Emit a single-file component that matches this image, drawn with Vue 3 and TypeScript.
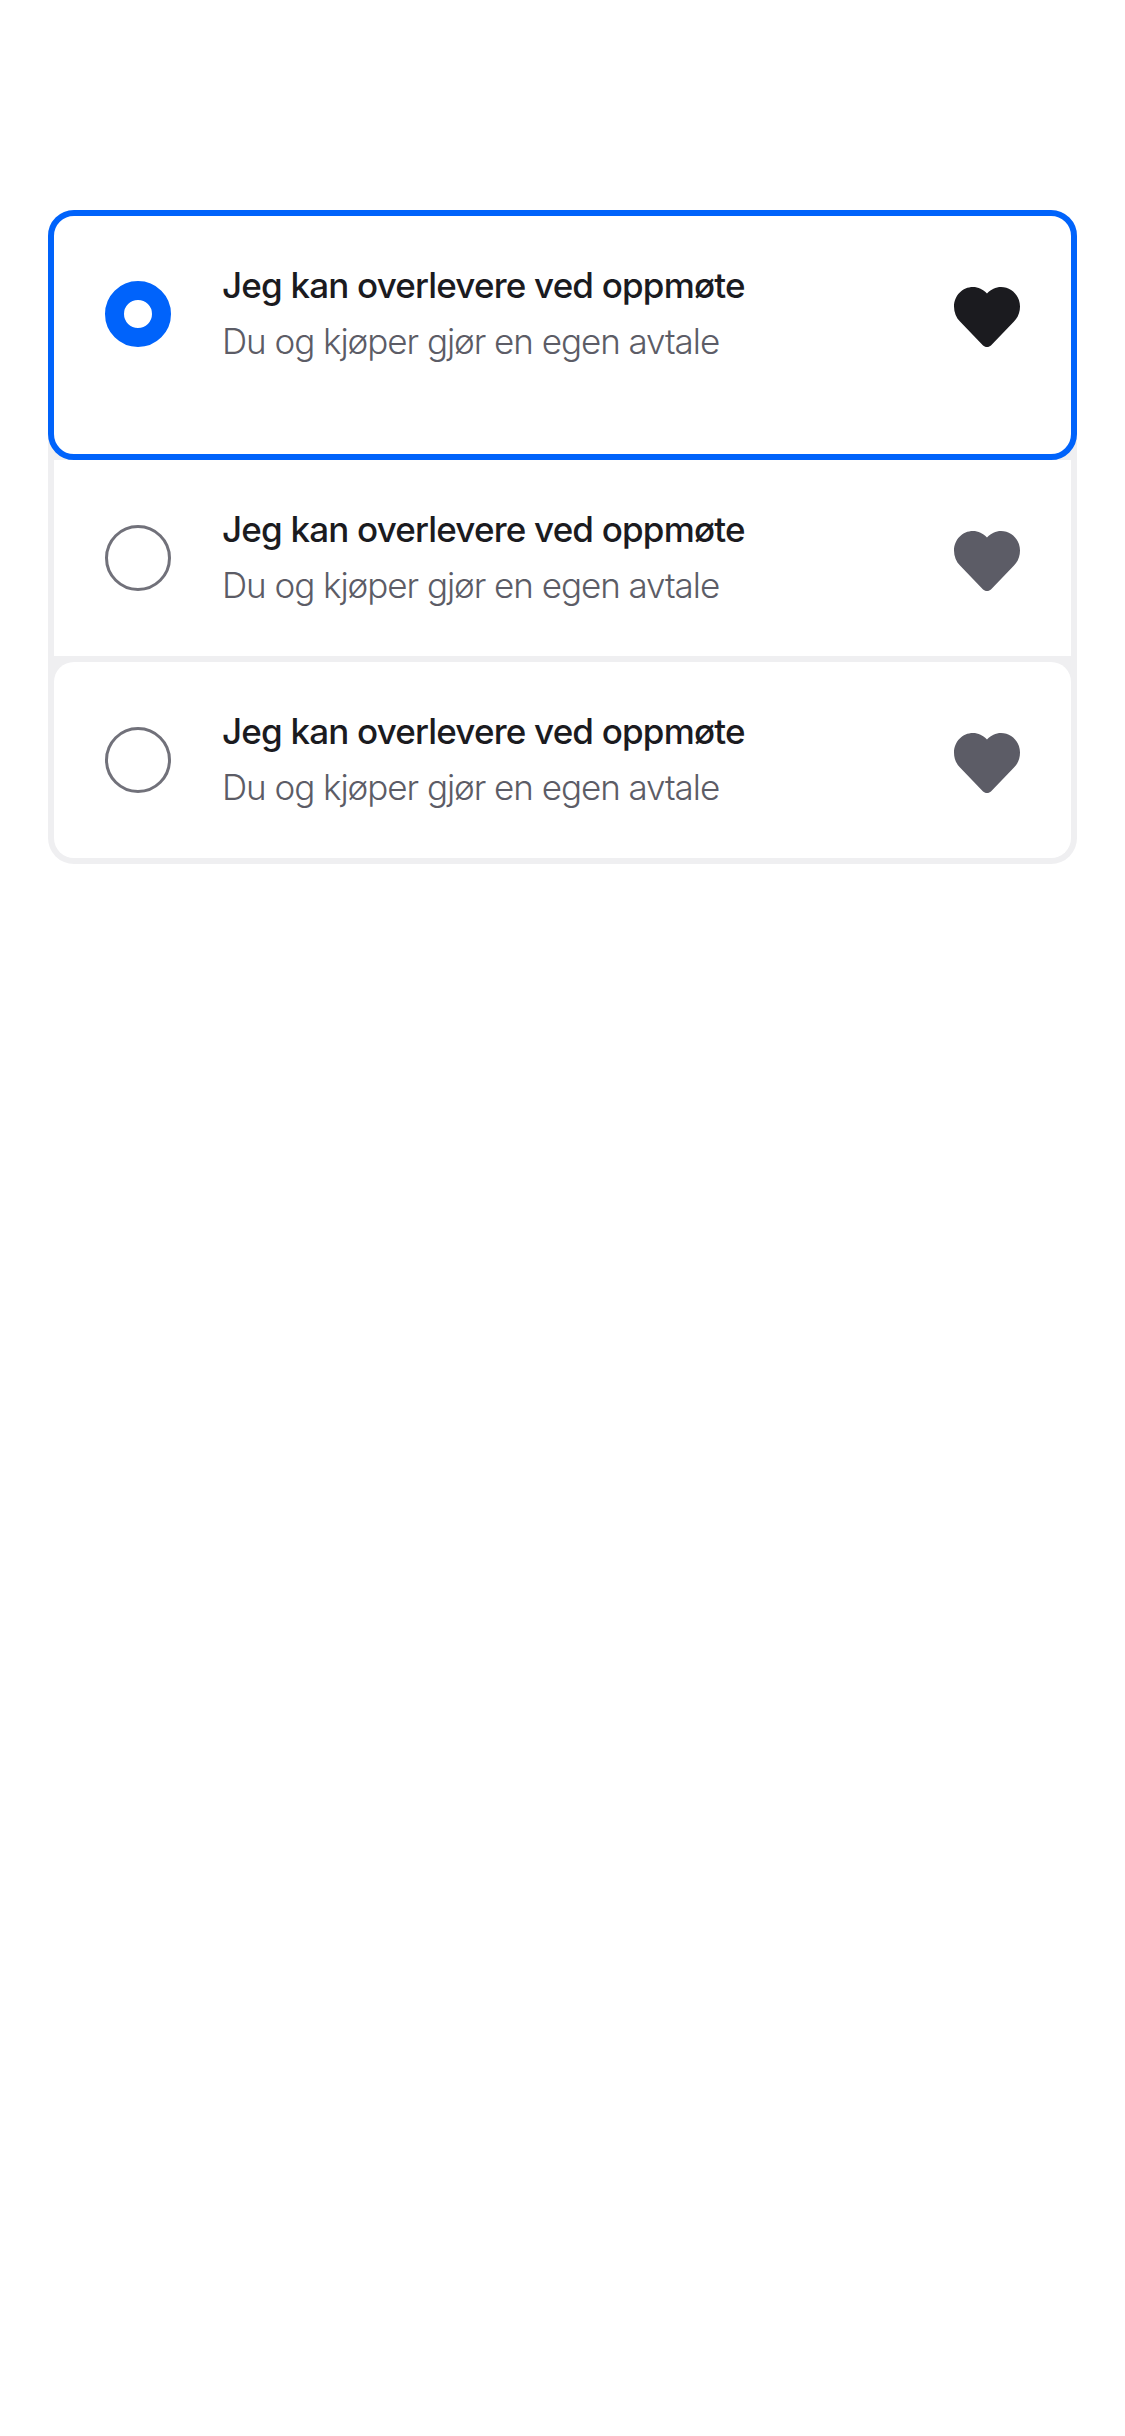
<script setup lang="ts">
import { ref } from 'vue'

interface Option {
  id: number
  title: string
  subtitle: string
}

const selected = ref(1)
const options: Option[] = [1, 2, 3].map((id) => ({
  id,
  title: 'Jeg kan overlevere ved oppmøte',
  subtitle: 'Du og kjøper gjør en egen avtale',
}))
</script>

<template>
  <main class="screen">
    <div class="group" role="radiogroup">
      <div v-for="option in options" :key="option.id" class="cell">
        <div
          class="card"
          :class="{ selected: selected === option.id }"
          role="radio"
          :aria-checked="selected === option.id"
          @click="selected = option.id"
        >
          <span class="radio"></span>
          <div class="copy">
            <div class="title">{{ option.title }}</div>
            <div class="subtitle">{{ option.subtitle }}</div>
          </div>
          <svg class="heart" viewBox="0 0 66 60" aria-hidden="true">
            <path
              d="M33 6.5C29.2 2.4 24.2 0 19 0C8.500 0 0 8.700 0 19.500C0 25.500 2.200 30.700 6 34.600L28.800 58.200C31.200 60.600 34.800 60.600 37.200 58.200L60 34.600C63.800 30.700 66 25.500 66 19.500C66 8.700 57.500 0 47 0C41.800 0 36.800 2.400 33 6.500Z"
            />
          </svg>
        </div>
      </div>
    </div>
  </main>
</template>

<style>
body {
  margin: 0;
  background: #fff;
}
</style>

<style scoped>
.screen {
  box-sizing: border-box;
  min-height: 2436px;
  padding: 210px 48px 0;
  background: #fff;
  font-family: Inter, 'Noto Sans', sans-serif;
}
.group {
  display: flex;
  flex-direction: column;
}
.cell {
  padding: 6px;
  background: #efeff1;
}
.cell:first-child {
  padding: 0;
  border-radius: 26px 26px 0 0;
}
.cell:nth-child(2) {
  padding-top: 0;
}
.cell:last-child {
  padding-top: 0;
  border-radius: 0 0 26px 26px;
}
.card {
  display: flex;
  align-items: flex-start;
  box-sizing: border-box;
  height: 196px;
  padding: 0 51px;
  background: #fff;
}
.cell:last-child .card {
  border-radius: 20px;
}
.card.selected {
  height: 250px;
  border: 6px solid #0063fb;
  border-radius: 26px;
}
.radio {
  flex: none;
  box-sizing: border-box;
  width: 66px;
  height: 66px;
  margin-top: 65px;
  border: 3px solid #71717a;
  border-radius: 50%;
}
.selected .radio {
  border: 19px solid #0063fb;
}
.copy {
  flex: 1;
  margin: 41px 0 0 51px;
  white-space: nowrap;
}
.title,
.subtitle {
  height: 56px;
  line-height: 56px;
  font-size: 35px;
}
.title {
  font-weight: 500;
  letter-spacing: -0.82px;
  color: #1b1b1f;
}
.subtitle {
  font-weight: 300;
  letter-spacing: -1.05px;
  color: #5c5c66;
}
.heart {
  flex: none;
  width: 66px;
  height: 60px;
  margin-top: 71px;
  fill: #5c5c66;
}
.selected .heart {
  fill: #1b1b1f;
}
</style>
